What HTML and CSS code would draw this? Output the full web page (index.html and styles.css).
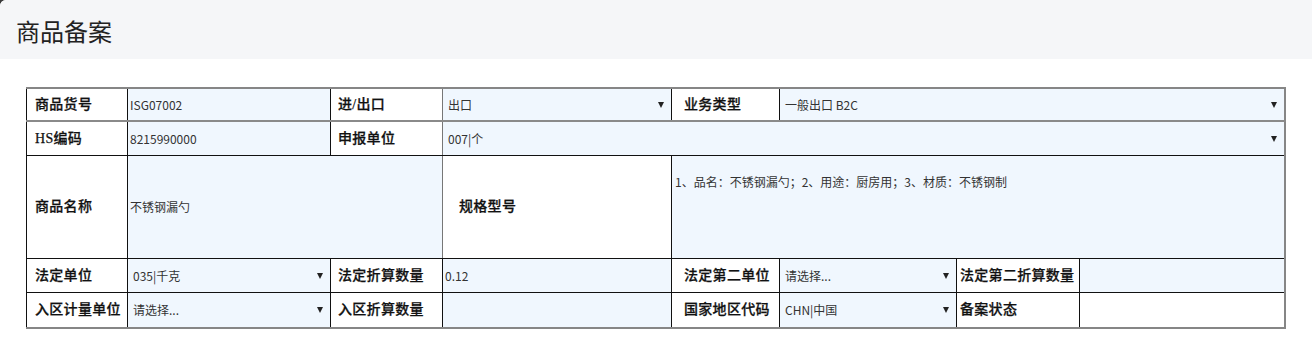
FILE: index.html
```html
<!DOCTYPE html>
<html lang="zh">
<head>
<meta charset="utf-8">
<title>商品备案</title>
<link rel="stylesheet" href="styles.css">
</head>
<body>
<div class="page">
  <div class="header"><h1 class="title">商品备案</h1></div>
  <div class="content">
    <table class="form">
      <colgroup>
        <col class="c1"><col class="c2"><col class="c3"><col class="c4">
        <col class="c5"><col class="c6"><col class="c7"><col class="c8">
      </colgroup>
      <tr class="r1">
        <td class="lbl p1">商品货号</td>
        <td class="val inp">ISG07002</td>
        <td class="lbl p3 gr">进/出口</td>
        <td class="val"><div class="sel"><span>出口</span><i class="arrow"></i></div></td>
        <td class="lbl p5">业务类型</td>
        <td class="val" colspan="3"><div class="sel"><span>一般出口 B2C</span><i class="arrow"></i></div></td>
      </tr>
      <tr class="r2">
        <td class="lbl p1">HS编码</td>
        <td class="val inp">8215990000</td>
        <td class="lbl p3 gr">申报单位</td>
        <td class="val" colspan="5"><div class="sel"><span>007|个</span><i class="arrow"></i></div></td>
      </tr>
      <tr class="r3">
        <td class="lbl p1">商品名称</td>
        <td class="val inp gr" colspan="2">不锈钢漏勺</td>
        <td class="lbl p4">规格型号</td>
        <td class="val area" colspan="4">1、品名：不锈钢漏勺；2、用途：厨房用；3、材质：不锈钢制</td>
      </tr>
      <tr class="r4">
        <td class="lbl p1">法定单位</td>
        <td class="val"><div class="sel"><span>035|千克</span><i class="arrow"></i></div></td>
        <td class="lbl p3">法定折算数量</td>
        <td class="val inp">0.12</td>
        <td class="lbl p5">法定第二单位</td>
        <td class="val"><div class="sel"><span>请选择...</span><i class="arrow"></i></div></td>
        <td class="lbl p7">法定第二折算数量</td>
        <td class="val inp"></td>
      </tr>
      <tr class="r5">
        <td class="lbl p1">入区计量单位</td>
        <td class="val"><div class="sel"><span>请选择...</span><i class="arrow"></i></div></td>
        <td class="lbl p3">入区折算数量</td>
        <td class="val inp"></td>
        <td class="lbl p5">国家地区代码</td>
        <td class="val"><div class="sel"><span>CHN|中国</span><i class="arrow"></i></div></td>
        <td class="lbl p7">备案状态</td>
        <td class="blank"></td>
      </tr>
    </table>
  </div>
</div>
</body>
</html>
```

FILE: styles.css
```css
html, body {
  margin: 0;
  padding: 0;
}
body {
  background: #3a3a3a;
}
.page {
  background: #ffffff;
  border-top-left-radius: 6px;
  min-height: 347px;
  overflow: hidden;
}
.header {
  background: #f5f6f8;
  height: 59px;
  display: flex;
  align-items: center;
  padding-left: 16px;
}
.title {
  margin: 0;
  padding-top: 3px;
  font: 400 24px/1 "Noto Sans CJK SC", sans-serif;
  color: #222;
}
.content {
  padding: 28px 0 0 26px;
}
.form {
  border-collapse: collapse;
  table-layout: fixed;
  width: 1258px;
  border-top: 2px solid #868686;
  border-right: 2px solid #868686;
  border-bottom: 2px solid #868686;
  border-left: 1px solid #000;
}
.c1 { width: 101px; }
.c2 { width: 203px; }
.c3 { width: 112px; }
.c4 { width: 229px; }
.c5 { width: 108px; }
.c6 { width: 177px; }
.c7 { width: 123px; }
.c8 { width: 205px; }
.form td {
  border: 1px solid #111;
  padding: 0;
  vertical-align: middle;
  white-space: nowrap;
  overflow: hidden;
}
.r1 td { height: 31px; border-bottom: 2px solid #8a8a8a; }
.r2 td { height: 33px; }
.r3 td { height: 102px; }
.r4 td { height: 33px; }
.r5 td { height: 34px; }
.form td.gr { border-right-color: #777; }
.lbl {
  font: 500 14px/1 "Liberation Serif", "Noto Sans CJK SC", serif;
  color: #111;
  letter-spacing: 0.3px;
  -webkit-text-stroke: 0.25px #111;
}
.p1 { padding-left: 8px !important; }
.p3 { padding-left: 7px !important; }
.p4 { padding-left: 16px !important; }
.p5 { padding-left: 12px !important; }
.p7 { padding-left: 3px !important; }
.val {
  background: #f0f7fe;
  font: 400 12px/1 "Noto Sans CJK SC", sans-serif;
  color: #333;
}
.inp {
  padding-left: 2px !important;
}
.sel {
  display: flex;
  align-items: center;
  justify-content: space-between;
  padding: 0 7px 0 5px;
}
.arrow {
  width: 0;
  height: 0;
  border-left: 3px solid transparent;
  border-right: 3px solid transparent;
  border-top: 6px solid #222;
}
.form td.area {
  vertical-align: top;
  height: 82px;
  padding: 20px 0 0 3px;
}
.blank {
  background: #fff;
}
```
